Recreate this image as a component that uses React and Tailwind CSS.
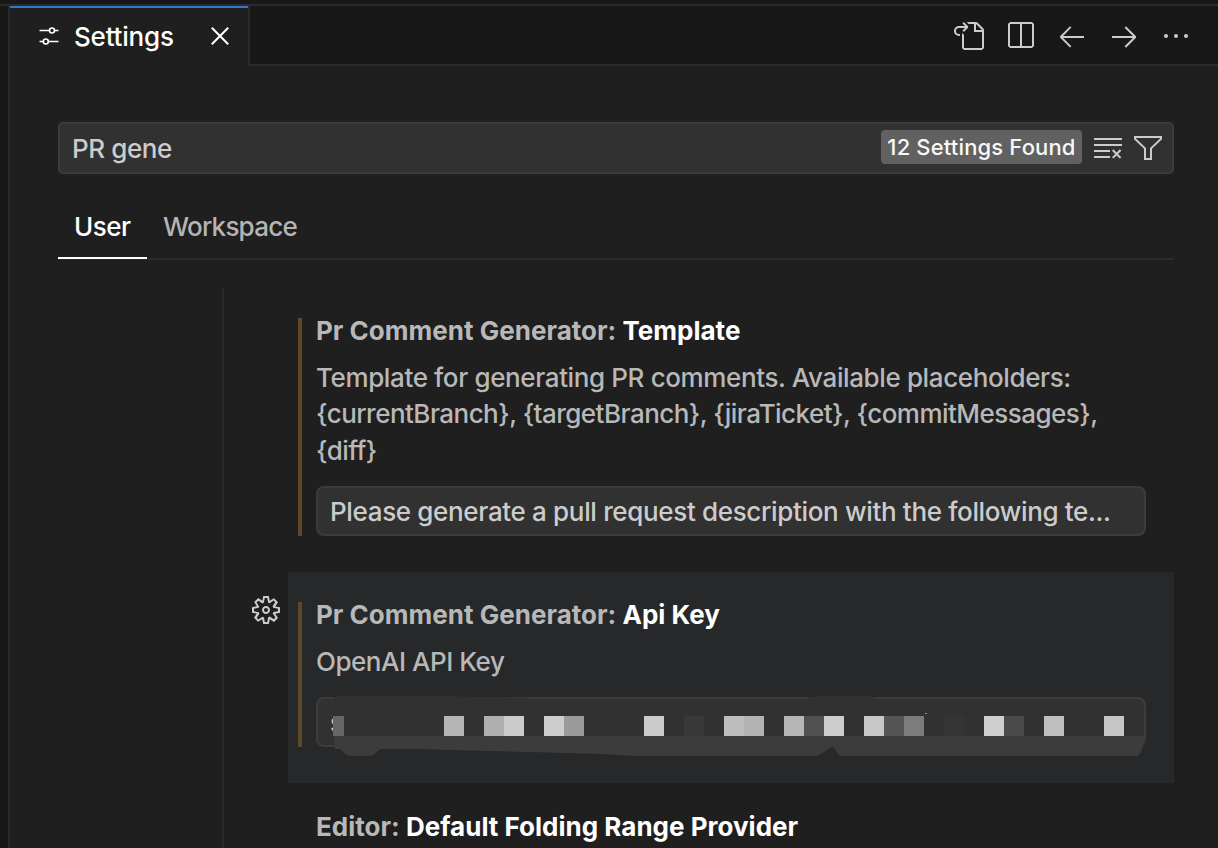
import React from "react";
import { VscGoToFile, VscSplitHorizontal, VscArrowLeft, VscArrowRight, VscClearAll, VscFilter, VscGear } from "react-icons/vsc";

const mosaic = [
  [333, 11, "#666666"], [444, 20, "#b5b5b5"], [484, 20, "#afafaf"], [504, 20, "#cccccc"],
  [544, 20, "#cdcdcd"], [564, 20, "#9b9b9b"], [644, 20, "#cccccc"], [684, 20, "#393939"],
  [724, 20, "#bebebe"], [744, 20, "#b3b3b3"], [784, 20, "#b6b6b6"], [804, 20, "#505050"],
  [824, 20, "#cdcdcd"], [864, 20, "#c8c8c8"], [884, 20, "#555555"], [904, 20, "#7c7c7c"],
  [944, 20, "#343434"], [984, 20, "#cecece"], [1004, 20, "#4a4a4a"], [1044, 20, "#bfbfbf"],
  [1104, 20, "#c6c6c6"],
];

function SlidersIcon() {
  return (
    <svg width="20" height="20" viewBox="0 0 20 20" fill="none" stroke="currentColor" strokeWidth="1.6" className="shrink-0">
      <path d="M0.5 4.5H10.2M15.8 4.5H19.5M0.5 15.5H4M9.6 15.5H19.5" />
      <circle cx="13" cy="4.5" r="2.5" />
      <circle cx="6.8" cy="15.5" r="2.5" />
    </svg>
  );
}

function CloseIcon() {
  return (
    <svg width="18" height="18" viewBox="0 0 18 18" fill="none" stroke="currentColor" strokeWidth="2" className="shrink-0">
      <path d="M0.8 0.8L17.2 17.2M17.2 0.8L0.8 17.2" />
    </svg>
  );
}

function Header() {
  return (
    <header className="flex h-[60px] shrink-0">
      <div className="h-full w-[240px] shrink-0 border-r-2 border-[#2b2b2b]">
        <div className="flex h-full items-center border-t-2 border-[#3376cd] pl-[29px] text-white">
          <span className="mb-[2px]"><SlidersIcon /></span>
          <span className="ml-[15px] w-[100px] text-[26px] leading-[32px] tracking-[-0.2px] whitespace-nowrap">Settings</span>
          <span className="mb-[2px] ml-[37px]"><CloseIcon /></span>
        </div>
      </div>
      <div className="flex flex-1 items-center justify-end gap-[20px] border-b-2 border-[#2b2b2b] bg-[#181818] pt-[2px] pr-[26px] text-[#cccccc]">
        <VscGoToFile size={32} />
        <VscSplitHorizontal size={32} />
        <VscArrowLeft size={32} />
        <VscArrowRight size={32} />
        <svg width="32" height="32" viewBox="0 0 32 32" fill="currentColor">
          <circle cx="6" cy="16" r="2" /><circle cx="16" cy="16" r="2" /><circle cx="26" cy="16" r="2" />
        </svg>
      </div>
    </header>
  );
}

function Search() {
  return (
    <div className="flex h-[52px] items-center rounded-[5px] border-2 border-[#3c3c3c] bg-[#313131] pl-[12px] text-[#cccccc]">
      <span className="flex-1 text-[26px] tracking-[-0.4px]">PR gene</span>
      <span className="mb-[2px] flex h-[34px] w-[201px] items-center justify-center rounded-[4px] bg-[#616161] text-[22px] tracking-[0.15px] whitespace-nowrap text-[#f8f8f8]">12 Settings Found</span>
      <VscClearAll size={32} className="ml-[10px]" />
      <VscFilter size={32} className="mr-[8px] ml-[8px]" />
    </div>
  );
}

function Title({ scope, name }) {
  return (
    <h3 className="text-[26px] leading-[32px] font-[650] tracking-[0.01px] whitespace-nowrap text-[#b8b8b8]">
      {scope}: <span className="text-white">{name}</span>
    </h3>
  );
}

function RedactedValue() {
  return (
    <svg width="832" height="64" viewBox="314 695 832 64" className="absolute top-[-4px] left-[-4px]">
      <path d="M334 697Q338 696 345 696H440L530 698V740H334Z" fill="#313131" />
      <path d="M806 699Q812 696 820 696H865Q872 696 876 699V710H806Z" fill="#313131" />
      <path d="M334 736H1144C1144 744 1143 750 1138 756H840C837 754 836 748 832 747L817 756H635L600 754L530 752L450 750L420 749H381C375 753 374 756 368 756H352C346 756 344 753 340 749H335Z" fill="#3c3c3c" />
      {mosaic.map(([x, w, fill]) => (
        <rect key={x} x={x} y="716" width={w} height="20" fill={fill} />
      ))}
      <path d="M925 713.5H927" stroke="#999999" />
    </svg>
  );
}

export default function App() {
  return (
    <div className="flex h-[848px] w-[1218px] flex-col overflow-hidden bg-[#181818] font-['Inter','Liberation_Sans',sans-serif] font-[450] antialiased">
      <div className="h-[6px] shrink-0 border-b-2 border-[#2b2b2b]" />
      <div className="flex min-h-0 flex-1 pl-[8px]">
        <div className="flex min-w-0 flex-1 flex-col border-l-2 border-[#2b2b2b] bg-[#1f1f1f]">
          <Header />
          <main className="flex min-h-0 flex-1 flex-col pt-[56px] pr-[44px] pl-[48px]">
            <Search />
            <nav className="mt-[26px] flex h-[60px] shrink-0 border-b-2 border-[#2b2b2b] text-[26px] leading-[32px]">
              <div className="h-[59px] w-[89px] border-b-2 border-white pt-[11px] pl-[16px] tracking-[-0.5px] text-white">User</div>
              <div className="pt-[11px] pl-[16px] tracking-[-0.77px] text-[#b4b4b4]">Workspace</div>
            </nav>
            <div className="mt-[28px] flex min-h-0 flex-1">
              <div className="w-[166px] shrink-0 border-r-2 border-[#2b2b2b]" />
              <div className="flex w-[64px] shrink-0 justify-end pt-[306px] pr-[6px] text-[#cccccc]">
                <VscGear size={32} className="shrink-0" />
              </div>
              <div className="w-[886px] shrink-0">
                <section className="h-[284px] pt-[30px] pl-[10px]">
                  <div className="flex h-[218px] w-[848px] flex-col border-l-4 border-[#5d4827] pl-[14px]">
                    <div className="-mt-[3px]"><Title scope="Pr Comment Generator" name="Template" /></div>
                    <p className="mt-[13px] text-[26px] leading-[36.4px] tracking-[-0.38px] whitespace-nowrap text-[#b8b8b8]">
                      Template for generating PR comments. Available placeholders:<br />
                      <span className="tracking-[-0.53px]">
                        {"{currentBranch}, {targetBranch}, {jiraTicket}, {commitMessages},"}<br />
                        {"{diff}"}
                      </span>
                    </p>
                    <div className="mt-[17px] flex h-[50px] shrink-0 items-center rounded-[8px] border-2 border-[#3c3c3c] bg-[#313131] pl-[12px] text-[26px] tracking-[-0.34px] whitespace-nowrap text-[#cccccc]">
                      Please generate a pull request description with the following te...
                    </div>
                  </div>
                </section>
                <section className="h-[211px] bg-[#26282a] pt-[30px] pl-[10px]">
                  <div className="flex h-[145px] w-[848px] flex-col border-l-4 border-[#5d4827] pl-[14px]">
                    <div className="-mt-[3px]"><Title scope="Pr Comment Generator" name="Api Key" /></div>
                    <p className="mt-[13px] text-[26px] leading-[36.4px] tracking-[-0.48px] text-[#b8b8b8]">OpenAI API Key</p>
                    <div className="relative mt-[17px] flex h-[50px] shrink-0 items-center rounded-[8px] border-2 border-[#3c3c3c] bg-[#313131] pl-[12px] text-[26px] text-[#cccccc]">
                      s
                      <RedactedValue />
                    </div>
                  </div>
                </section>
                <section className="pt-[28px] pl-[28px]">
                  <Title scope="Editor" name="Default Folding Range Provider" />
                </section>
              </div>
            </div>
          </main>
        </div>
      </div>
    </div>
  );
}
